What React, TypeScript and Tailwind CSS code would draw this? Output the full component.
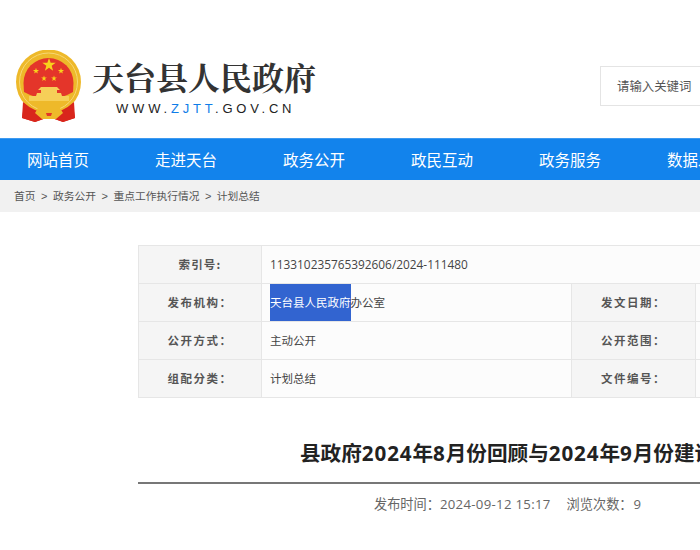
import React from "react";

const cjk = "font-['Microsoft_YaHei','Noto_Sans_CJK_SC',sans-serif]";
const latin = "font-['Open_Sans','Noto_Sans_CJK_SC',sans-serif]";

const navItems = ["网站首页", "走进天台", "政务公开", "政民互动", "政务服务", "数据发布"];
const crumbs = ["首页", "政务公开", "重点工作执行情况", "计划总结"];

const Star = ({ x, y, r }: { x: number; y: number; r: number }) => {
  const pts = Array.from({ length: 10 }, (_, i) => {
    const a = (Math.PI / 5) * i - Math.PI / 2;
    const d = i % 2 === 0 ? r : r * 0.4;
    return `${(x + Math.cos(a) * d).toFixed(2)},${(y + Math.sin(a) * d).toFixed(2)}`;
  }).join(" ");
  return <polygon points={pts} fill="#f8d21c" />;
};

const Emblem = () => (
  <svg width="68" height="73" viewBox="0 0 68 73" className="shrink-0">
    <path d="M10 48 L7 68 L20 72 L34 67 L48 72 L60 68 L57 48 Z" fill="#d9261c" />
    <circle cx="33.5" cy="32" r="32.5" fill="#eeb92a" />
    <circle cx="33.5" cy="32" r="29" fill="none" stroke="#f7d774" strokeWidth="1" />
    <path d="M8.5 33 A25 25 0 1 1 58.5 33 L58 42 Q34 56 9 42 Z" fill="#e4352a" />
    <Star x={34} y={15} r={7} />
    <Star x={21} y={21} r={3.2} />
    <Star x={46} y={21} r={3.2} />
    <Star x={29} y={28.5} r={3} />
    <Star x={39} y={28.5} r={3} />
    <path d="M23 40 L26 37 H42 L45 40 H42 V43 H46 L47 46 H21 L22 43 H26 V40 Z" fill="#f6cf58" />
    <rect x="14" y="46" width="40" height="5" fill="#f6cf58" />
    <path d="M8 52 Q20 63 34 63 Q47 63 59 52 L60 68 L48 72 L34 67 L20 72 L7 68 Z" fill="#d9261c" />
    <path d="M23 58 H45 L48 63 L41 69 H27 L20 63 Z" fill="#eeb92a" />
    <path d="M31 63 H37 L36 66 H32 Z" fill="#e4352a" />
  </svg>
);

const Label = ({ children, wide = false }: { children: React.ReactNode; wide?: boolean }) => (
  <div
    className={`flex items-center justify-center bg-[#f5f5f5] text-[11.5px] font-bold text-[#555] ${
      wide ? "tracking-[1.5px]" : "tracking-[1.2px]"
    }`}
  >
    {children}
  </div>
);

const Value = ({ children }: { children?: React.ReactNode }) => (
  <div className="flex items-center bg-[#fcfcfc] pl-2 text-[11.5px] text-[#444]">{children}</div>
);

const Num = ({ children }: { children: React.ReactNode }) => (
  <span className="font-['Open_Sans',sans-serif] tracking-[0.9px]">{children}</span>
);

export default function App() {
  return (
    <div className={`h-[550px] w-[700px] overflow-hidden bg-white ${cjk}`}>
      <header className="flex h-[138px] items-start">
        <div className="ml-[15px] mt-[50px]">
          <Emblem />
        </div>
        <div className="ml-[9px] mt-[56px] w-[232px] shrink-0">
          <div className="text-[32px] font-bold leading-[40px] text-[#333] whitespace-nowrap font-['Noto_Serif_CJK_SC','Noto_Sans_CJK_SC',sans-serif]">
            天台县人民政府
          </div>
          <div className="ml-[24px] mt-[4px] whitespace-nowrap font-['Liberation_Sans',sans-serif] text-[13px] font-normal leading-[18px] tracking-[3.8px] text-[#222]">
            WWW.<span className="text-[#0f7de8]">ZJTT</span>.GOV.CN
          </div>
        </div>
        <div className="ml-[276px] mt-[66px] flex h-[40px] w-[200px] shrink-0 items-center border border-[#e4e4e4] pl-[16px] text-[12.4px] text-[#555]">
          请输入关键词
        </div>
      </header>

      <nav className="flex h-[42px] items-center gap-[64px] border-t border-[#3d9af0] bg-[#1283ec] pl-[27px] text-[15.5px] text-white">
        {navItems.map((item) => (
          <span key={item} className="w-[64px] shrink-0 whitespace-nowrap">
            {item}
          </span>
        ))}
      </nav>

      <div className="flex h-[32px] items-center bg-[#f1f1f1] pl-[14px] text-[10.75px] text-[#555]">
        {crumbs.map((c, i) => (
          <React.Fragment key={c}>
            {i > 0 && <span className="mx-[5.5px] font-['Liberation_Sans',sans-serif] text-[11px]">&gt;</span>}
            <span>{c}</span>
          </React.Fragment>
        ))}
      </div>

      <div className="ml-[138px] mt-[33px] w-[900px]">
        <div className="grid w-full grid-cols-[122px_309px_123px_1fr] grid-rows-[37px_37px_37px_37px] gap-[1px] border border-[#e6e6e6] bg-[#e6e6e6]">
          <Label>索引号:</Label>
          <div className={`col-span-3 flex items-center bg-[#fcfcfc] pl-2 text-[11.85px] text-[#444] ${latin}`}>
            113310235765392606/2024-111480
          </div>
          <Label wide>发布机构：</Label>
          <Value>
            <span className="flex h-full items-center bg-[#3264d0] text-white">天台县人民政府</span>
            办公室
          </Value>
          <Label wide>发文日期：</Label>
          <Value />
          <Label wide>公开方式：</Label>
          <Value>主动公开</Value>
          <Label wide>公开范围：</Label>
          <Value />
          <Label wide>组配分类：</Label>
          <Value>计划总结</Value>
          <Label wide>文件编号：</Label>
          <Value />
        </div>

        <h1 className="ml-[162px] mt-[39px] whitespace-nowrap text-[20.6px] font-bold leading-[30px] text-[#222]">
          县政府<Num>2024</Num>年<Num>8</Num>月份回顾与<Num>2024</Num>年<Num>9</Num>月份建议
        </h1>
        <div className="mt-[14px] h-[2px] bg-[#777]" />
        <div className={`ml-[236px] mt-[10px] flex gap-[16px] whitespace-nowrap text-[13.2px] leading-[20px] text-[#666] ${latin}`}>
          <span>
            发布时间：<span className="tracking-[0.3px]">2024-09-12 15:17</span>
          </span>
          <span>
            浏览次数：<span className="ml-[1px]">9</span>
          </span>
        </div>
      </div>
    </div>
  );
}
